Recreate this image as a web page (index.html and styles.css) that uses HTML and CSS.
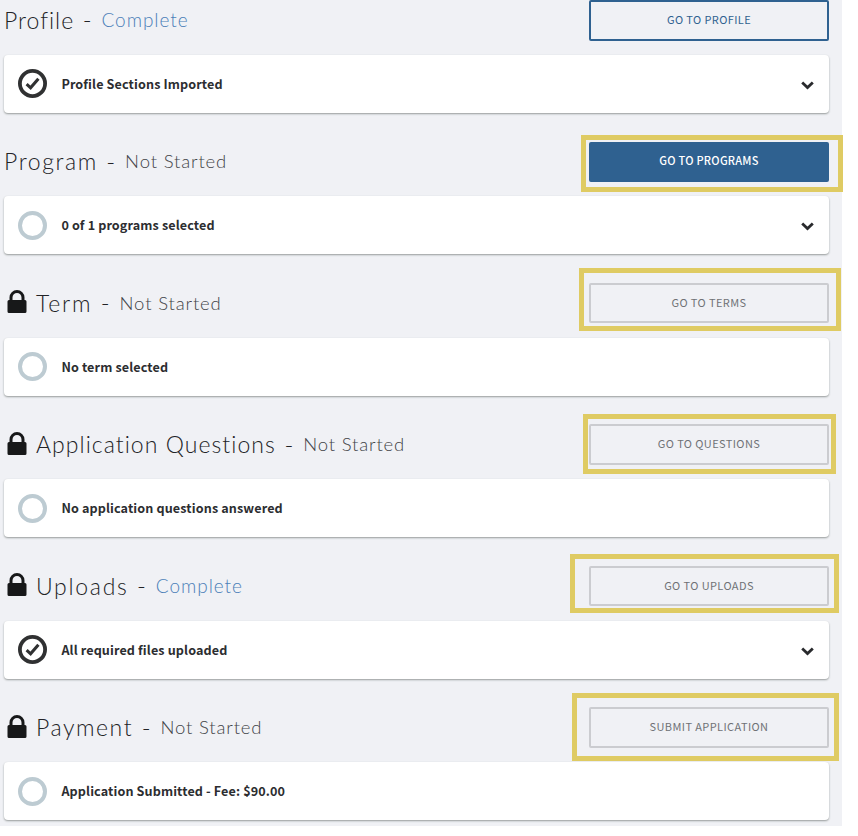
FILE: index.html
```html
<!DOCTYPE html>
<html lang="en">
<head>
<meta charset="utf-8">
<title>Application Progress</title>
<link rel="stylesheet" href="styles.css">
</head>
<body>
<svg class="defs" aria-hidden="true">
  <symbol id="lock" viewBox="0 0 19 23"><path fill="#171819" fill-rule="evenodd" d="M2 10V7.500a7.500 7.500 0 0 1 15 0V10h.5a1.500 1.500 0 0 1 1.500 1.500v10a1.500 1.500 0 0 1-1.500 1.500h-16A1.500 1.500 0 0 1 0 21.500v-10A1.500 1.500 0 0 1 1.500 10zM5 10h9V7.500a4.500 4.500 0 0 0-9 0z"/></symbol>
  <symbol id="check" viewBox="0 0 29 29"><circle cx="14.500" cy="14.500" r="12.600" fill="none" stroke="#303132" stroke-width="3.800"/><path d="M8.600 15.200l4 3.600 7.800-9" fill="none" stroke="#303132" stroke-width="3.100"/></symbol>
  <symbol id="empty" viewBox="0 0 29 29"><circle cx="14.500" cy="14.500" r="12.500" fill="none" stroke="#bdcbd2" stroke-width="4"/></symbol>
  <symbol id="chevron" viewBox="0 0 13 9"><path d="M1.200 1.600l5.300 5 5.300-5" fill="none" stroke="#292a2d" stroke-width="2.800"/></symbol>
</svg>
<main class="page">
  <section class="step profile">
    <header class="head"><h2 class="title">Profile</h2><span class="dash">-</span><span class="status done">Complete</span>
      <div class="action"><button class="btn outline">GO TO PROFILE</button></div></header>
    <div class="card"><svg class="state"><use href="#check"/></svg><span class="label">Profile Sections Imported</span><svg class="chevron"><use href="#chevron"/></svg></div>
  </section>
  <section class="step program">
    <header class="head"><h2 class="title">Program</h2><span class="dash">-</span><span class="status">Not Started</span>
      <div class="action"><button class="btn primary">GO TO PROGRAMS</button><i class="mark"></i></div></header>
    <div class="card"><svg class="state"><use href="#empty"/></svg><span class="label">0 of 1 programs selected</span><svg class="chevron"><use href="#chevron"/></svg></div>
  </section>
  <section class="step term">
    <header class="head"><svg class="lock"><use href="#lock"/></svg><h2 class="title">Term</h2><span class="dash">-</span><span class="status">Not Started</span>
      <div class="action"><button class="btn">GO TO TERMS</button><i class="mark"></i></div></header>
    <div class="card"><svg class="state"><use href="#empty"/></svg><span class="label">No term selected</span></div>
  </section>
  <section class="step questions">
    <header class="head"><svg class="lock"><use href="#lock"/></svg><h2 class="title">Application Questions</h2><span class="dash">-</span><span class="status">Not Started</span>
      <div class="action"><button class="btn">GO TO QUESTIONS</button><i class="mark"></i></div></header>
    <div class="card"><svg class="state"><use href="#empty"/></svg><span class="label">No application questions answered</span></div>
  </section>
  <section class="step uploads">
    <header class="head"><svg class="lock"><use href="#lock"/></svg><h2 class="title">Uploads</h2><span class="dash">-</span><span class="status done">Complete</span>
      <div class="action"><button class="btn">GO TO UPLOADS</button><i class="mark"></i></div></header>
    <div class="card"><svg class="state"><use href="#check"/></svg><span class="label">All required files uploaded</span><svg class="chevron"><use href="#chevron"/></svg></div>
  </section>
  <section class="step payment">
    <header class="head"><svg class="lock"><use href="#lock"/></svg><h2 class="title">Payment</h2><span class="dash">-</span><span class="status">Not Started</span>
      <div class="action"><button class="btn">SUBMIT APPLICATION</button><i class="mark"></i></div></header>
    <div class="card"><svg class="state"><use href="#empty"/></svg><span class="label">Application Submitted - Fee: $90.00</span></div>
  </section>
</main>
</body>
</html>
```
FILE: styles.css
```css
* { box-sizing: border-box; }
body { margin: 0; background: #fff; font-family: "Noto Sans CJK SC", "Noto Sans", sans-serif; }
.defs { position: absolute; width: 0; height: 0; }
.page { width: 842px; height: 826px; padding: 0 13px 0 4px; background: #f0f1f5; }
.step { height: 141.5px; }
.payment { height: 119px; }
.head { display: flex; align-items: center; height: 40.4px; white-space: nowrap; font-family: Lato, sans-serif; font-weight: 300; color: #222326; }
.lock { width: 20px; height: 23px; margin: 0 9px 3px 3px; flex: none; }
.title { margin: 0 0 1.2px; font-size: 23px; font-weight: 300; line-height: 40px; letter-spacing: 1px; }
.program .title { letter-spacing: 1.6px; }
.term .title { letter-spacing: 1.8px; }
.questions .title { letter-spacing: 1.05px; }
.uploads .title { letter-spacing: 1.7px; }
.payment .title { letter-spacing: 1.55px; }
.dash { font-size: 24px; width: 10px; margin: 0 9.300px 1.2px 8px; text-align: center; }
.status { margin-bottom: 1.2px; font-size: 18.5px; line-height: 40px; letter-spacing: .85px; color: #424448; }
.status.done { color: #4c7fb8; font-size: 19px; letter-spacing: .95px; }
.action { position: relative; width: 240px; height: 40.4px; margin-left: auto; }
.btn { display: block; width: 100%; height: 100%; padding: 0 0 3px; border: 2px solid #cbccd0; border-radius: 2px; background: transparent; color: #6f7175; font: 400 11px "Noto Sans CJK SC", sans-serif; letter-spacing: .4px; }
.btn.outline { border-color: #2f6190; color: #2f6190; }
.btn.primary { border-color: #2f6190; background: #2f6190; color: #fff; font-weight: 500; letter-spacing: .25px; }
.profile .btn, .questions .btn, .payment .btn { height: 40.6px; }
.questions .btn, .payment .btn { margin-top: -.3px; }
.mark { position: absolute; border: 5px solid #dfcb63; pointer-events: none; }
.program .mark { left: -8px; top: -6.5px; width: 262px; height: 57px; }
.term .mark { left: -10px; top: -15px; width: 262px; height: 63px; }
.questions .mark { left: -6px; top: -10.5px; width: 253px; height: 60px; }
.uploads .mark { left: -19px; top: -12px; width: 269px; height: 59px; }
.payment .mark { left: -17px; top: -14.5px; width: 267px; height: 68px; }
.card { display: flex; align-items: center; height: 58px; margin-top: 14.2px; padding: 0 15px 0 14px; background: #fff; border-radius: 4px; box-shadow: 0 1px 2px rgba(40, 50, 45, .45); }
.state { width: 29px; height: 29px; margin-right: 14.4px; flex: none; }
.label { font-size: 12.6px; font-weight: 700; line-height: 20px; color: #2c2d30; letter-spacing: .12px; }
.chevron { width: 13px; height: 9px; margin: 3px 0 0 auto; flex: none; }
```
